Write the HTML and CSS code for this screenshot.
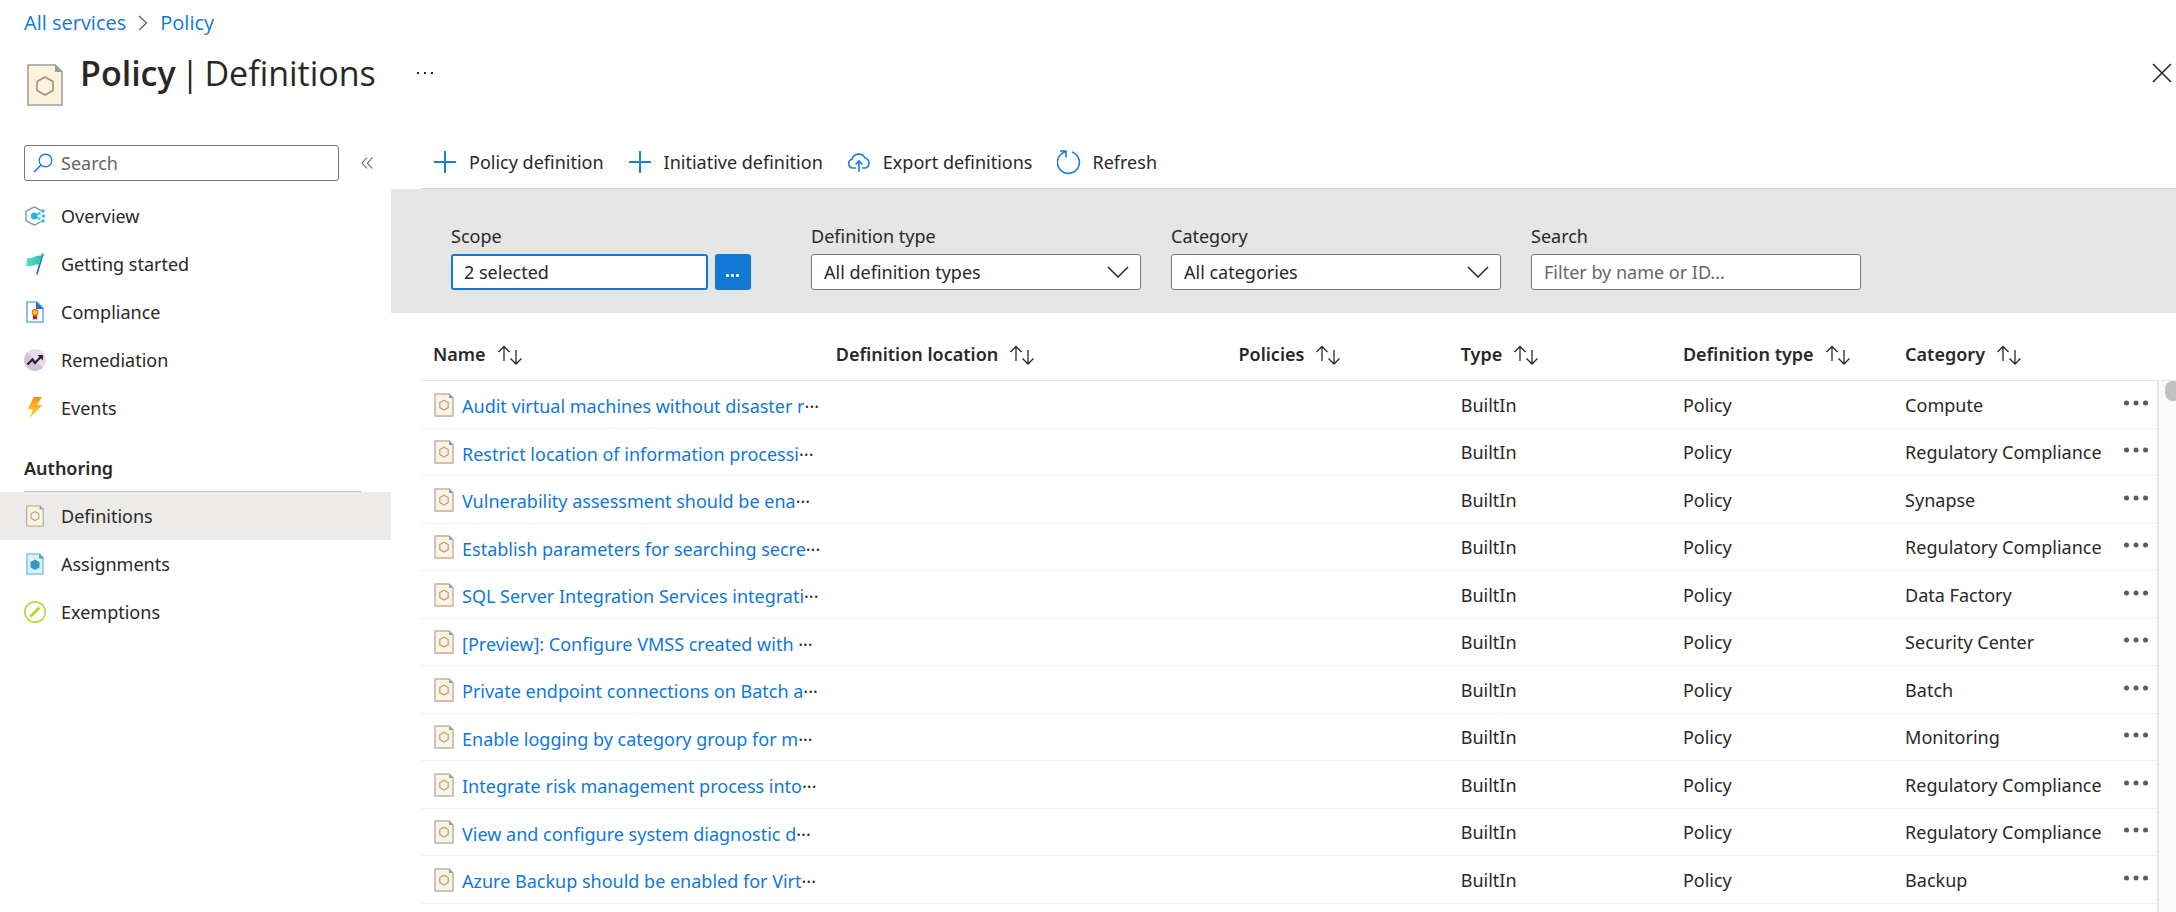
FILE: index.html
```
<!DOCTYPE html>
<html lang="en">
<head>
<meta charset="utf-8">
<title>Policy | Definitions</title>
<link rel="stylesheet" href="styles.css">
</head>
<body>
<svg class="sprite" aria-hidden="true">
  <defs>
    <linearGradient id="bolt-fill" x1="0" y1="0" x2="0" y2="1"><stop offset="0" stop-color="#f78d1e"/><stop offset=".5" stop-color="#fdb827"/><stop offset="1" stop-color="#ffdd3a"/></linearGradient>
    <linearGradient id="flag-fill" x1="0" y1="0" x2="1" y2="0"><stop offset="0" stop-color="#4fe3cd"/><stop offset="1" stop-color="#2fbfa0"/></linearGradient>
  </defs>
  <symbol id="doc" viewBox="0 0 20 24">
    <path d="M1 1H15L19 5V23H1Z" fill="#fff3dc"/>
    <path d="M1 1V23M19 5V23" fill="none" stroke="#a6a6a6" stroke-width="1.2"/>
    <path d="M.4 1H15M.4 23H19.6" fill="none" stroke="#c4c4c0" stroke-width="2"/>
    <path d="M15 0L20 5H15Z" fill="#9c9c9c"/>
    <path d="M10 7.2L14.2 9.6V14.6L10 17L5.8 14.6V9.6Z" fill="none" stroke="#a3a298" stroke-width="1.2"/>
  </symbol>
  <symbol id="sort" viewBox="0 0 26 20">
    <path d="M7 16V1.5M1.5 7L7 1.5L12.500 7M19 5V19M13.500 13.500L19 19L24.500 13.500" fill="none" stroke="#292827" stroke-width="1.3"/>
  </symbol>
  <symbol id="plus" viewBox="0 0 24 24"><path d="M12 1V23M1 12H23" fill="none" stroke="#1a7fd9" stroke-width="2"/></symbol>
  <symbol id="dots" viewBox="0 0 24 6"><g fill="#5c5b5a"><circle cx="2.500" cy="3" r="2.500"/><circle cx="12" cy="3" r="2.500"/><circle cx="21.500" cy="3" r="2.500"/></g></symbol>
  <symbol id="chevron" viewBox="0 0 22 12"><path d="M1 1L11 11L21 1" fill="none" stroke="#292827" stroke-width="1.500"/></symbol>
</svg>

<header class="top">
  <nav class="crumbs" aria-label="Breadcrumb">
    <a href="#">All services</a>
    <svg width="10" height="16" viewBox="0 0 10 16"><path d="M1 1L8.500 8L1 15" fill="none" stroke="#605e5c" stroke-width="1.300"/></svg>
    <a href="#">Policy</a>
  </nav>
  <div class="heading">
    <svg class="heading-icon" width="36" height="42" viewBox="0 0 36 42">
      <path d="M1 1H28L35 8V41H1Z" fill="#fff3dc" stroke="#a0a0a0" stroke-width="1.600"/>
      <path d="M28 0L36 8H28Z" fill="#9c9c9c"/>
      <path d="M18 13L26 17.500V26.500L18 31L10 26.500V17.500Z" fill="none" stroke="#94948c" stroke-width="1.600"/>
    </svg>
    <h1><b>Policy</b> <span>|</span> <span>Definitions</span></h1>
    <button class="plain" type="button" aria-label="More"><svg width="18" height="4" viewBox="0 0 18 4"><g fill="#292827"><rect x="1" y="1" width="2" height="2"/><rect x="8" y="1" width="2" height="2"/><rect x="15" y="1" width="2" height="2"/></g></svg></button>
    <button class="plain close" type="button" aria-label="Close"><svg width="20" height="20" viewBox="0 0 20 20"><path d="M1 1L19 19M19 1L1 19" stroke="#292827" stroke-width="1.600"/></svg></button>
  </div>
</header>

<div class="body">
  <aside class="side">
    <div class="side-search">
      <label class="search-box">
        <svg width="20" height="20" viewBox="0 0 20 20"><path d="M1 19L8 12" stroke="#1a7fd9" stroke-width="1.600"/><circle cx="12.500" cy="7.500" r="6.300" fill="none" stroke="#1a7fd9" stroke-width="1.400"/></svg>
        <input type="text" placeholder="Search" aria-label="Search menu">
      </label>
      <button class="plain" type="button" aria-label="Collapse menu"><svg width="12" height="12" viewBox="0 0 12 12"><path d="M6 .5L1 6L6 11.500M11.500 .5L6.500 6L11.500 11.500" fill="none" stroke="#605e5c" stroke-width="1.100"/></svg></button>
    </div>
    <nav class="menu">
      <a href="#"><svg width="22" height="22" viewBox="0 0 22 22"><path d="M17.500 6.200L17 5.500L10.500 1.800L2 6.300V15.700L10.500 20.200L17 16.700" fill="none" stroke="#9b9b9b" stroke-width="1.500"/><circle cx="10.300" cy="11" r="3.500" fill="#2fb0d6"/><g fill="#50d8f0"><circle cx="15" cy="8.500" r="1.700"/><circle cx="15" cy="13.500" r="1.700"/></g><g fill="#2db5dc"><rect x="17.500" y="4.500" width="3" height="3" rx="1"/><rect x="18" y="9.500" width="3" height="3" rx="1"/><rect x="17.500" y="14.500" width="3" height="3" rx="1"/></g></svg>Overview</a>
      <a href="#"><svg width="22" height="22" viewBox="0 0 22 22"><path d="M3.500 4.500C8 6.800 11 2 17.500 2.500L14.500 11.500C10 11 7 15 2 12.500Z" fill="url(#flag-fill)"/><path d="M18.600 1.500L12.800 21.500" stroke="#1b74d0" stroke-width="1.700"/><circle cx="18.700" cy="1.700" r="1.500" fill="#5ea0ef"/></svg>Getting started</a>
      <a href="#"><svg width="22" height="22" viewBox="0 0 22 22"><path d="M3 1H13L19 7V21H3Z" fill="#fff" stroke="#6fb0ee" stroke-width="1.600"/><path d="M12 .5L19.500 8H12Z" fill="#1b74d0"/><path d="M9 12H13V19L11 17.500L9 19Z" fill="#b5152b"/><circle cx="11" cy="11.500" r="2.800" fill="#ffc928" stroke="#f06d1a" stroke-width="1.200"/></svg>Compliance</a>
      <a href="#"><svg width="22" height="22" viewBox="0 0 22 22"><circle cx="11" cy="11" r="11" fill="#e6deea"/><path d="M3.200 3.200A11 11 0 0 0 18.800 18.800Z" fill="#d1c3d9"/><path d="M3.500 15.500L8.500 10.500L11 14L17.500 7" fill="none" stroke="#341a45" stroke-width="2.200"/><path d="M13.500 6H19V11.500Z" fill="#341a45"/></svg>Remediation</a>
      <a href="#"><svg width="22" height="22" viewBox="0 0 22 22"><path d="M9.500 0H18L13 8H18.500L5 22L9 12.500H3.800Z" fill="url(#bolt-fill)"/></svg>Events</a>
      <h2>Authoring</h2>
      <a href="#" class="current" aria-current="page"><svg width="22" height="22"><use href="#doc"/></svg>Definitions</a>
      <a href="#"><svg width="22" height="22" viewBox="0 0 22 22"><path d="M3 1H15.500L19 4.500V21H3Z" fill="#dcf0f8" stroke="#84c9e2" stroke-width="1.600"/><path d="M15 .5L20 5.500H15Z" fill="#45a5c9"/><path d="M11 6.500L15.500 9V14.500L11 17L6.500 14.500V9Z" fill="#3999c6"/></svg>Assignments</a>
      <a href="#"><svg width="22" height="22" viewBox="0 0 22 22"><circle cx="11" cy="11" r="10.200" fill="#fff" stroke="#b5d334" stroke-width="1.500"/><path d="M6.500 15.500L15.500 6.500" stroke="#b5d334" stroke-width="3"/></svg>Exemptions</a>
    </nav>
  </aside>

  <main class="main">
    <div class="toolbar">
      <button type="button"><svg width="24" height="24"><use href="#plus"/></svg>Policy definition</button>
      <button type="button"><svg width="24" height="24"><use href="#plus"/></svg>Initiative definition</button>
      <button type="button"><svg width="24" height="24" viewBox="0 0 24 24"><path d="M9 18H5.500A4.500 4.500 0 0 1 5 9.200A7 7 0 0 1 18 8A5.200 5.200 0 0 1 18.500 18H15M12 22V11M8.500 14.500L12 11L15.500 14.500" fill="none" stroke="#1a7fd9" stroke-width="1.600"/></svg>Export definitions</button>
      <button type="button"><svg width="24" height="26" viewBox="0 0 24 26"><path d="M15 3A11 11 0 1 1 8.500 2.800M3 2H9V8.500" fill="none" stroke="#1a7fd9" stroke-width="1.600"/></svg>Refresh</button>
    </div>
    <form class="filters">
      <div class="field">
        <label for="scope">Scope</label>
        <div class="scope"><input id="scope" class="focused" type="text" value="2 selected"><button type="button" aria-label="Choose scope"><svg width="14" height="4" viewBox="0 0 14 4"><g fill="#fff"><rect x="0" y="0" width="3" height="3" rx="1"/><rect x="5" y="0" width="3" height="3" rx="1"/><rect x="10" y="0" width="3" height="3" rx="1"/></g></svg></button></div>
      </div>
      <div class="field">
        <label for="deftype">Definition type</label>
        <div class="pick"><select id="deftype"><option>All definition types</option></select><svg width="22" height="12"><use href="#chevron"/></svg></div>
      </div>
      <div class="field">
        <label for="category">Category</label>
        <div class="pick"><select id="category"><option>All categories</option></select><svg width="22" height="12"><use href="#chevron"/></svg></div>
      </div>
      <div class="field">
        <label for="filter">Search</label>
        <input id="filter" type="text" placeholder="Filter by name or ID...">
      </div>
    </form>
    <div class="results">
      <table>
        <colgroup><col class="wide"><col class="wide"><col class="mid"><col class="mid"><col class="mid"><col class="mid"><col class="end"></colgroup>
        <thead>
          <tr>
            <th>Name<svg width="26" height="20"><use href="#sort"/></svg></th>
            <th>Definition location<svg width="26" height="20"><use href="#sort"/></svg></th>
            <th>Policies<svg width="26" height="20"><use href="#sort"/></svg></th>
            <th>Type<svg width="26" height="20"><use href="#sort"/></svg></th>
            <th>Definition type<svg width="26" height="20"><use href="#sort"/></svg></th>
            <th>Category<svg width="26" height="20"><use href="#sort"/></svg></th>
            <th></th>
          </tr>
        </thead>
        <tbody>
          <tr><td><div class="name"><svg width="20" height="24"><use href="#doc"/></svg><span><a href="#">Audit virtual machines without disaster r</a>···</span></div></td><td></td><td></td><td>BuiltIn</td><td>Policy</td><td>Compute</td><td class="more"><button class="plain" type="button" aria-label="More actions"><svg width="24" height="6"><use href="#dots"/></svg></button></td></tr>
          <tr><td><div class="name"><svg width="20" height="24"><use href="#doc"/></svg><span><a href="#">Restrict location of information processi</a>···</span></div></td><td></td><td></td><td>BuiltIn</td><td>Policy</td><td>Regulatory Compliance</td><td class="more"><button class="plain" type="button" aria-label="More actions"><svg width="24" height="6"><use href="#dots"/></svg></button></td></tr>
          <tr><td><div class="name"><svg width="20" height="24"><use href="#doc"/></svg><span><a href="#">Vulnerability assessment should be ena</a>···</span></div></td><td></td><td></td><td>BuiltIn</td><td>Policy</td><td>Synapse</td><td class="more"><button class="plain" type="button" aria-label="More actions"><svg width="24" height="6"><use href="#dots"/></svg></button></td></tr>
          <tr><td><div class="name"><svg width="20" height="24"><use href="#doc"/></svg><span><a href="#">Establish parameters for searching secre</a>···</span></div></td><td></td><td></td><td>BuiltIn</td><td>Policy</td><td>Regulatory Compliance</td><td class="more"><button class="plain" type="button" aria-label="More actions"><svg width="24" height="6"><use href="#dots"/></svg></button></td></tr>
          <tr><td><div class="name"><svg width="20" height="24"><use href="#doc"/></svg><span><a href="#">SQL Server Integration Services integrati</a>···</span></div></td><td></td><td></td><td>BuiltIn</td><td>Policy</td><td>Data Factory</td><td class="more"><button class="plain" type="button" aria-label="More actions"><svg width="24" height="6"><use href="#dots"/></svg></button></td></tr>
          <tr><td><div class="name"><svg width="20" height="24"><use href="#doc"/></svg><span><a href="#">[Preview]: Configure VMSS created with </a>···</span></div></td><td></td><td></td><td>BuiltIn</td><td>Policy</td><td>Security Center</td><td class="more"><button class="plain" type="button" aria-label="More actions"><svg width="24" height="6"><use href="#dots"/></svg></button></td></tr>
          <tr><td><div class="name"><svg width="20" height="24"><use href="#doc"/></svg><span><a href="#">Private endpoint connections on Batch a</a>···</span></div></td><td></td><td></td><td>BuiltIn</td><td>Policy</td><td>Batch</td><td class="more"><button class="plain" type="button" aria-label="More actions"><svg width="24" height="6"><use href="#dots"/></svg></button></td></tr>
          <tr><td><div class="name"><svg width="20" height="24"><use href="#doc"/></svg><span><a href="#">Enable logging by category group for m</a>···</span></div></td><td></td><td></td><td>BuiltIn</td><td>Policy</td><td>Monitoring</td><td class="more"><button class="plain" type="button" aria-label="More actions"><svg width="24" height="6"><use href="#dots"/></svg></button></td></tr>
          <tr><td><div class="name"><svg width="20" height="24"><use href="#doc"/></svg><span><a href="#">Integrate risk management process into</a>···</span></div></td><td></td><td></td><td>BuiltIn</td><td>Policy</td><td>Regulatory Compliance</td><td class="more"><button class="plain" type="button" aria-label="More actions"><svg width="24" height="6"><use href="#dots"/></svg></button></td></tr>
          <tr><td><div class="name"><svg width="20" height="24"><use href="#doc"/></svg><span><a href="#">View and configure system diagnostic d</a>···</span></div></td><td></td><td></td><td>BuiltIn</td><td>Policy</td><td>Regulatory Compliance</td><td class="more"><button class="plain" type="button" aria-label="More actions"><svg width="24" height="6"><use href="#dots"/></svg></button></td></tr>
          <tr><td><div class="name"><svg width="20" height="24"><use href="#doc"/></svg><span><a href="#">Azure Backup should be enabled for Virt</a>···</span></div></td><td></td><td></td><td>BuiltIn</td><td>Policy</td><td>Backup</td><td class="more"><button class="plain" type="button" aria-label="More actions"><svg width="24" height="6"><use href="#dots"/></svg></button></td></tr>
        </tbody>
      </table>
      <div class="scroll" aria-hidden="true"><div class="scroll-head"></div><div class="track"><div class="thumb"></div></div></div>
    </div>
  </main>
</div>
</body>
</html>
```
FILE: styles.css
```
* {
  box-sizing: border-box;
}

body {
  margin: 0;
  min-height: 100vh;
  display: flex;
  flex-direction: column;
  background: #fff;
  color: #292827;
  font: 18px/24px "Noto Sans", "Open Sans", sans-serif;
}

button,
input,
select {
  font: inherit;
  color: inherit;
}

button {
  cursor: pointer;
}

a {
  color: #1077dc;
  text-decoration: none;
}

svg {
  display: block;
  flex: none;
}

.sprite {
  position: absolute;
  width: 0;
  height: 0;
}

.plain {
  display: block;
  padding: 0;
  border: 0;
  background: none;
}

/* Header */
.top {
  padding: 11px 4px 0 24px;
}

.crumbs {
  display: flex;
  align-items: center;
  gap: 12px;
  font-family: "Open Sans", "Noto Sans", sans-serif;
  font-size: 20px;
}

.heading {
  display: flex;
  align-items: center;
  height: 76px;
  padding-left: 3px;
}

.heading-icon {
  margin: 24px 17px 0 0;
}

h1 {
  display: flex;
  gap: 5px;
  margin: 0 40px 0 0;
  font-family: "Open Sans", "Noto Sans", sans-serif;
  font-size: 34px;
  line-height: 44px;
  font-weight: 400;
}

h1 b {
  font-weight: 600;
}

.close {
  margin-left: auto;
}

.body {
  flex: 1;
  display: flex;
}

/* Side menu */
.side {
  flex: none;
  width: 391px;
  padding-top: 34px;
}

.side-search {
  display: flex;
  align-items: center;
  gap: 22px;
  padding-left: 24px;
  margin-bottom: 11px;
}

.search-box {
  display: flex;
  align-items: center;
  gap: 8px;
  width: 315px;
  height: 36px;
  padding: 0 8px;
  border: 1px solid #797775;
  border-radius: 3px;
}

.search-box input {
  flex: 1;
  min-width: 0;
  padding: 0;
  border: 0;
  outline: 0;
  background: none;
}

::placeholder {
  color: #686664;
  opacity: 1;
}

.menu a {
  display: flex;
  align-items: center;
  gap: 15px;
  height: 48px;
  padding-left: 24px;
  color: inherit;
}

.menu .current {
  background: #ecebe9;
}

.menu h2 {
  margin: 0 30px 0 24px;
  padding: 24px 0 11px;
  border-bottom: 1px solid #c8c6c4;
  font-size: 18px;
  line-height: 24px;
  font-weight: 600;
}

/* Commands */
.main {
  flex: 1;
  min-width: 0;
  display: flex;
  flex-direction: column;
}

.toolbar {
  display: flex;
  align-items: center;
  gap: 24px;
  height: 78px;
  margin-left: 30px;
  padding: 24px 12px 0;
  border-bottom: 1px solid #d2d2d2;
}

.toolbar button {
  display: flex;
  align-items: center;
  gap: 12px;
  padding: 0;
  border: 0;
  background: none;
}

/* Filters */
.filters {
  display: flex;
  gap: 30px;
  height: 124px;
  padding: 35px 60px 0;
  background: #e5e5e5;
}

.field {
  width: 330px;
}

.field label {
  display: block;
  margin-bottom: 6px;
}

.field input,
.field select {
  display: block;
  width: 100%;
  height: 36px;
  padding: 0 12px;
  border: 1px solid #797775;
  border-radius: 3px;
  background: #fff;
  outline: 0;
}

.field select {
  appearance: none;
}

.field .focused {
  width: 257px;
  padding: 0 11px;
  border: 2px solid #1179d4;
}

.scope {
  display: flex;
  gap: 7px;
}

.scope button {
  display: grid;
  place-items: center;
  width: 36px;
  height: 36px;
  padding: 8px 0 0;
  border: 0;
  border-radius: 3px;
  background: #1179d4;
}

.pick {
  position: relative;
}

.pick svg {
  position: absolute;
  top: 12px;
  right: 12px;
  pointer-events: none;
}

/* Results */
.results {
  flex: 1;
  display: flex;
  align-items: stretch;
  padding-left: 30px;
}

table {
  flex: 1;
  align-self: flex-start;
  table-layout: fixed;
  width: 100%;
  border-spacing: 0;
}

.wide {
  width: 23.2%;
}

.mid {
  width: 12.8%;
}

.end {
  width: 2.4%;
}

th,
td {
  padding: 0 0 0 12px;
  text-align: left;
  white-space: nowrap;
}

th {
  height: 68px;
  padding-top: 14px;
  border-bottom: 1px solid #e5e5e5;
  font-weight: 600;
}

th svg {
  display: inline-block;
  margin-left: 11px;
  vertical-align: -4px;
}

td {
  height: 48px;
  border-bottom: 1px solid #f0f0f0;
}

tr:nth-child(even) td {
  height: 47px;
}

.name {
  display: flex;
  align-items: center;
  gap: 8px;
  padding-left: 1px;
}

.name span {
  padding-top: 3px;
  white-space: pre;
}

.more {
  padding: 0 0 4px 9px;
}

.scroll {
  flex: none;
  display: flex;
  flex-direction: column;
  width: 19px;
}

.scroll-head {
  height: 68px;
  border-bottom: 1px solid #e5e5e5;
}

.track {
  flex: 1;
  padding-left: 6px;
  overflow: hidden;
  border-left: 2px solid #e5e5e5;
  background: #fafafa;
}

.thumb {
  width: 16px;
  height: 20px;
  border-radius: 8px;
  background: #c1c1c1;
}
```
